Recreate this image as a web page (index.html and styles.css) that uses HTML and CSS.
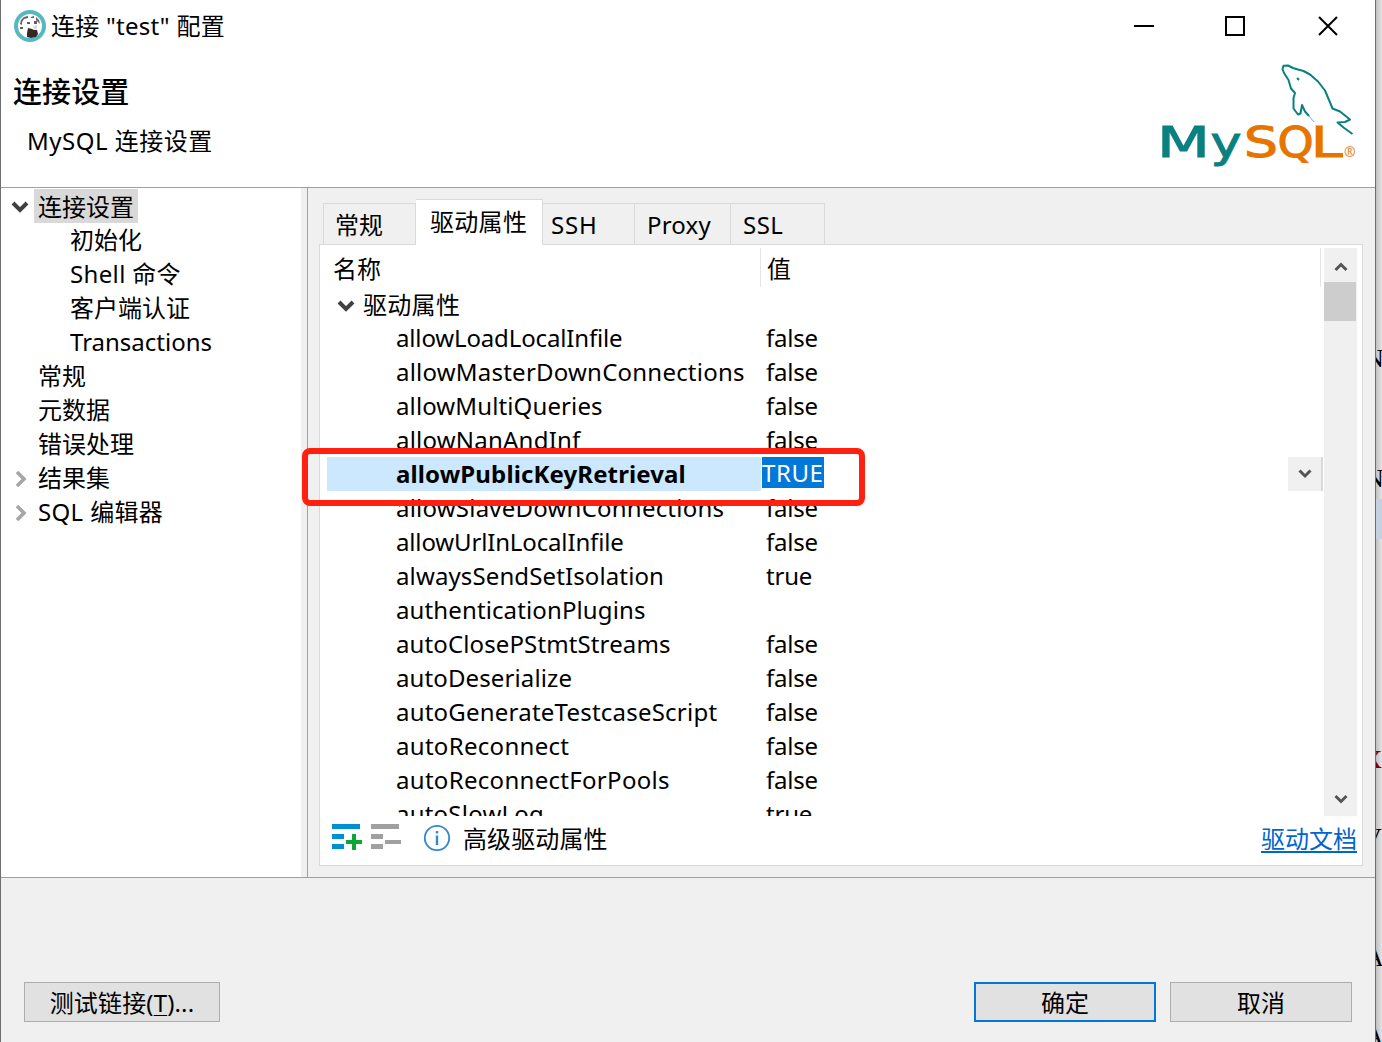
FILE: index.html
```html
<!DOCTYPE html>
<html lang="zh-CN">
<head>
<meta charset="utf-8">
<title>连接 "test" 配置</title>
<link rel="stylesheet" href="styles.css">
</head>
<body>
<div class="desktop">
<main class="dialog">
  <header class="banner">
    <div class="titlebar">
      <svg class="app-icon" width="32" height="32" viewBox="0 0 32 32">
        <circle cx="16" cy="16" r="14" fill="#fff" stroke="#56b8c0" stroke-width="4"/>
        <path d="M6 14l1-4 3-3 4-1v2l-4 1-2 3v3zM17 7l3-1v2h-3zM22 7l3 3 1 4-2-2-2-2zM13 12h3v2h-3zM20 11h3v3h-3zM6 17h3v2H6z" fill="#6a5b56"/>
        <path d="M14 18l4 1 2 1h3l1 4-2 3-5 1-4-1v-4z" fill="#382822"/>
        <path d="M19 16l4-1v4l-3 1z" fill="#ddd"/>
      </svg>
      <span class="title">连接 "test" 配置</span>
      <svg class="controls" width="206" height="24" viewBox="0 0 206 24" fill="none" stroke="#000" stroke-width="2">
        <path d="M0 12h20M92 3h18v18h-18z"/><path d="M185 3l18 18M203 3l-18 18"/>
      </svg>
    </div>
    <div class="headline">
      <div class="headings">
        <h1>连接设置</h1>
        <p>MySQL 连接设置</p>
      </div>
      <svg class="mysql" width="200" height="106" viewBox="0 0 200 106">
        <g fill="none" stroke="#0b8080" stroke-width="2" stroke-linejoin="round">
          <path d="M194.500 72L185.500 65.500 179.500 60.500 187 60 192 57.500 182 49.500 174.500 46.500 171 38 167 28.500 160 19.500 152 12.500 145.500 9 140 7.500 135 6 130 3.500 125.500 3.700 124.500 7 126 11 130.500 18 133 26.500 137 31 135.500 36 135.500 46.500 140 52.500 142.500 51.500 144 43 147 49.500 151 54"/>
          <path d="M151 54l5 6" stroke-width="1" opacity=".6"/>
          <path d="M139 16l2 2"/>
        </g>
        <g class="logo-my">
          <text x="-1" y="95" textLength="53" lengthAdjust="spacingAndGlyphs">M</text>
          <text x="52.400" y="95" textLength="31" lengthAdjust="spacingAndGlyphs">y</text>
        </g>
        <g class="logo-sql">
          <text x="86" y="95" textLength="34" lengthAdjust="spacingAndGlyphs">S</text>
          <text x="119.400" y="95" textLength="36.200" lengthAdjust="spacingAndGlyphs">Q</text>
          <text x="152.800" y="95" textLength="31.900" lengthAdjust="spacingAndGlyphs">L</text>
        </g>
        <text class="logo-reg" x="186" y="95">®</text>
      </svg>
    </div>
  </header>
  <div class="content">
    <nav class="tree">
      <div class="node top"><svg class="arrow" width="18" height="12" viewBox="0 0 18 12"><path d="M2 2l7 7 7-7" fill="none" stroke="#404040" stroke-width="4"/></svg><span class="label selected">连接设置</span></div>
      <div class="node child">初始化</div>
      <div class="node child wide">Shell 命令</div>
      <div class="node child">客户端认证</div>
      <div class="node child">Transactions</div>
      <div class="node">常规</div>
      <div class="node">元数据</div>
      <div class="node">错误处理</div>
      <div class="node top"><svg class="arrow" width="18" height="18" viewBox="0 0 18 18"><path d="M6 2l7 7-7 7" fill="none" stroke="#a6a6a6" stroke-width="3.600"/></svg><span class="label">结果集</span></div>
      <div class="node top wide"><svg class="arrow" width="18" height="18" viewBox="0 0 18 18"><path d="M6 2l7 7-7 7" fill="none" stroke="#a6a6a6" stroke-width="3.600"/></svg><span class="label">SQL 编辑器</span></div>
    </nav>
    <section class="page">
      <div class="tabs">
        <div class="tab t1">常规</div><div class="tab active">驱动属性</div><div class="tab t3">SSH</div><div class="tab t4">Proxy</div><div class="tab t5">SSL</div>
      </div>
      <div class="panel">
        <div class="table">
          <div class="grid">
            <div class="head"><div class="hname">名称</div><div class="hval">值</div></div>
            <div class="group"><svg width="18" height="12" viewBox="0 0 18 12"><path d="M2 2l7 7 7-7" fill="none" stroke="#404040" stroke-width="4"/></svg><span>驱动属性</span></div>
            <div class="row tight"><span>allowLoadLocalInfile</span><span>false</span></div>
            <div class="row loose"><span>allowMasterDownConnections</span><span>false</span></div>
            <div class="row"><span>allowMultiQueries</span><span>false</span></div>
            <div class="row loose"><span>allowNanAndInf</span><span>false</span></div>
            <div class="row current"><span>allowPublicKeyRetrieval</span><span class="edit"><mark>TRUE</mark></span><i class="drop"><svg width="14" height="10" viewBox="0 0 14 10"><path d="M1.500 1.500l5.500 5.500 5.500-5.500" fill="none" stroke="#555" stroke-width="3"/></svg></i></div>
            <div class="row loose"><span>allowSlaveDownConnections</span><span>false</span></div>
            <div class="row tight"><span>allowUrlInLocalInfile</span><span>false</span></div>
            <div class="row"><span>alwaysSendSetIsolation</span><span>true</span></div>
            <div class="row"><span>authenticationPlugins</span><span></span></div>
            <div class="row"><span>autoClosePStmtStreams</span><span>false</span></div>
            <div class="row"><span>autoDeserialize</span><span>false</span></div>
            <div class="row loose"><span>autoGenerateTestcaseScript</span><span>false</span></div>
            <div class="row looser"><span>autoReconnect</span><span>false</span></div>
            <div class="row looser"><span>autoReconnectForPools</span><span>false</span></div>
            <div class="row loose"><span>autoSlowLog</span><span>true</span></div>
          </div>
          <div class="scrollbar">
            <svg width="14" height="10" viewBox="0 0 14 10"><path d="M1.500 8l5.500-5.500 5.500 5.500" fill="none" stroke="#555" stroke-width="3"/></svg>
            <div class="thumb"></div>
            <svg class="down" width="14" height="10" viewBox="0 0 14 10"><path d="M1.500 2l5.500 5.500 5.500-5.500" fill="none" stroke="#555" stroke-width="3"/></svg>
          </div>
        </div>
        <div class="tools">
          <svg width="120" height="30" viewBox="0 0 120 30">
            <path d="M0 2h28v5H0zM0 12h12v5H0zM0 22h12v5H0z" fill="#0090d0"/>
            <path d="M20 12h4v6h6v4h-6v6h-4v-6h-6v-4h6z" fill="#0aa836"/>
            <path d="M39 2h28v5H39zM39 12h12v5H39zM39 22h12v5H39zM53 18h16v4H53z" fill="#a0a0a0"/>
            <circle cx="105" cy="16" r="12.200" fill="none" stroke="#3389cc" stroke-width="1.800"/>
            <path d="M103.800 9h2.400v2.500h-2.400zM103.800 13.500h2.400v9.500h-2.400z" fill="#3389cc"/>
          </svg>
          <span class="advanced">高级驱动属性</span>
          <a class="doc">驱动文档</a>
        </div>
      </div>
    </section>
  </div>
  <footer class="buttons">
    <button class="test">测试链接(<u>T</u>)...</button>
    <button class="ok">确定</button>
    <button>取消</button>
  </footer>
</main>
<aside class="behind">
  <span class="frag f1">N</span><span class="frag f2">N</span><i class="line"></i><span class="frag f3">X</span><span class="frag f4">V</span><span class="frag f5">A</span><span class="frag f6">A</span>
</aside>
<div class="highlight"></div>
</div>
</body>
</html>
```
FILE: styles.css
```css
* { box-sizing: border-box; }
body { margin: 0; overflow: hidden; font-family: "Noto Sans", "Noto Sans CJK SC", sans-serif; font-size: 24px; line-height: 34px; color: #000; }
.desktop { position: relative; display: flex; width: 1382px; height: 1042px; overflow: hidden; }
.dialog { display: flex; flex-direction: column; width: 1376px; height: 1042px; border-left: 1px solid #6e6e6e; border-right: 1px solid #6e6e6e; background: #f0f0f0; }
.banner { height: 188px; background: #fff; border-bottom: 1px solid #a0a0a0; }
.titlebar { display: flex; align-items: center; height: 52px; padding-left: 13px; }
.title { margin-left: 5px; letter-spacing: .25px; }
.controls { margin: 0 35px 0 auto; }
.headline { display: flex; justify-content: space-between; }
.headings { padding: 20px 0 0 12px; }
h1 { margin: 0; font-size: 29px; font-weight: 500; line-height: 40px; letter-spacing: .1px; }
p { margin: 12px 0 0 14px; letter-spacing: .5px; }
.mysql { margin: 10px 17px 0 0; overflow: visible; }
.logo-my, .logo-sql { font-family: "DejaVu Sans", sans-serif; font-size: 42px; stroke-width: 1px; }
.logo-my { fill: #0b8080; stroke: #0b8080; }
.logo-sql { fill: #e87400; stroke: #e87400; }
.logo-reg { fill: #e8913c; font-size: 14px; font-weight: bold; }
.content { display: flex; height: 690px; border-bottom: 1px solid #a0a0a0; }
.tree { width: 300px; padding-top: 1px; background: #fff; }
.node { height: 34px; padding-left: 37px; white-space: nowrap; }
.node.child { padding-left: 69px; }
.node.top { display: flex; padding-left: 10px; }
.node.wide { letter-spacing: .35px; }
.arrow { flex: none; align-self: center; margin-top: 2px; }
.label { height: 34px; margin-left: 5px; padding: 0 4px; }
.selected { background: #d9d9d9; line-height: 35px; }
.page { flex: 1; margin-left: 6px; padding: 11px 12px 11px 11px; border-left: 1px solid #a0a0a0; }
.tabs { display: flex; align-items: flex-end; height: 46px; margin-left: 4px; }
.tab { height: 42px; padding-top: 4px; border: 1px solid #d9d9d9; border-left: 0; }
.tab.t1 { width: 93px; padding-left: 11px; border-left: 1px solid #d9d9d9; }
.tab.active { z-index: 1; width: 127px; height: 46px; padding: 5px 0 0 14px; background: #fff; border-bottom: 0; letter-spacing: .3px; }
.tab.t3 { width: 92px; padding-left: 8px; letter-spacing: .8px; }
.tab.t4 { width: 96px; padding-left: 12px; letter-spacing: .2px; }
.tab.t5 { width: 94px; padding-left: 12px; letter-spacing: .5px; }
.panel { width: 1044px; height: 622px; margin-top: -1px; padding: 3px 5px 0 7px; border: 1px solid #d9d9d9; background: #fff; }
.table { display: flex; height: 568px; overflow: hidden; }
.grid { flex: 1; }
.head { display: flex; height: 39px; margin-right: 3px; border-right: 1px solid #e5e5e5; line-height: 41px; }
.hname { width: 434px; padding-left: 6px; border-right: 1px solid #e5e5e5; }
.hval { padding-left: 6px; }
.group { display: flex; align-items: center; height: 34px; padding-left: 10px; line-height: 35px; }
.group svg { margin-top: 4px; }
.group span { margin-left: 8px; letter-spacing: .3px; }
.row { display: flex; height: 34px; letter-spacing: .12px; }
.row.tight { letter-spacing: -.15px; }
.row.loose { letter-spacing: .22px; }
.row.looser { letter-spacing: .3px; }
.row span:first-child { width: 434px; padding-left: 69px; white-space: nowrap; }
.row span:nth-child(2) { padding-left: 5px; letter-spacing: -.2px; }
.row.current span:first-child { background: #cce8ff; font-weight: bold; }
.row.current .edit { padding-left: 1px; }
mark { display: block; height: 31px; background: #0078d7; color: #fff; line-height: 32px; letter-spacing: .6px; }
.drop { display: flex; align-items: center; justify-content: center; width: 35px; height: 34px; margin: 0 1px 0 auto; background: #f0f0f0; border-right: 2px solid #d9d9d9; }
.scrollbar { display: flex; flex-direction: column; align-items: center; width: 33px; padding: 14px 0 12px; background: #f0f0f0; }
.thumb { width: 32px; height: 39px; margin: 10px 1px 0 0; background: #cdcdcd; }
.down { margin-top: auto; }
.tools { display: flex; padding: 6px 0 0 5px; }
.advanced { margin-left: 11px; letter-spacing: .1px; }
.doc { margin-left: auto; color: #0066cc; text-decoration: underline; text-underline-offset: 3px; text-decoration-thickness: 2px; }
.buttons { display: flex; height: 164px; padding: 104px 23px 0; }
button { width: 182px; height: 40px; padding: 1px 0 0; border: 1px solid #adadad; background: #e1e1e1; font: inherit; color: #000; }
button.test { width: 196px; margin-right: auto; letter-spacing: .15px; }
button.ok { margin-right: 14px; border: 2px solid #0078d7; }
u { text-decoration-thickness: 1px; text-underline-offset: 3px; }
.behind { position: relative; width: 6px; overflow: hidden; background: linear-gradient(90deg, #c0c0c0, #e4e4e4); }
.frag { position: absolute; left: -11px; font: 26px/30px "Liberation Serif", serif; }
.f1 { top: 344px; }
.f2 { top: 464px; }
.f3 { top: 745px; left: -13px; color: #800000; font-weight: bold; }
.f4 { top: 823px; left: -13px; }
.f5 { top: 943px; }
.f6 { top: 1022px; }
.line { position: absolute; left: 0; top: 499px; width: 6px; height: 40px; background: #c5d0e0; }
.highlight { position: absolute; left: 302px; top: 448px; width: 563px; height: 58px; border: 6px solid #ff2010; border-radius: 8px; }
```
